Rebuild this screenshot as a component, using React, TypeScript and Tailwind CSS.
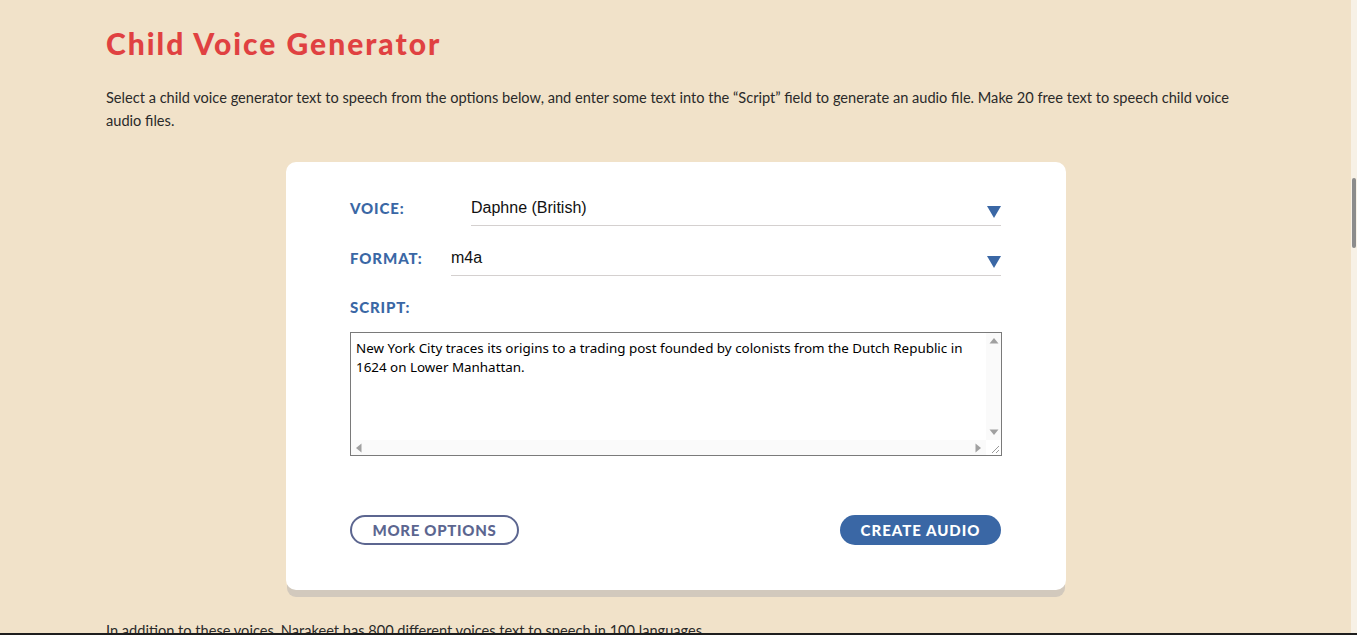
import React from "react";

function Caret() {
  return (
    <svg width="14" height="12" viewBox="0 0 14 12" className="shrink-0 mt-2">
      <path d="M0 0 L14 0 L7 12 Z" fill="#3a67a5" />
    </svg>
  );
}

function Arrow({ dir }: { dir: "up" | "down" | "left" | "right" }) {
  const d = {
    up: "M0.5 7.5 L5 2 L9.5 7.5 Z",
    down: "M0.5 2.5 L5 8 L9.5 2.5 Z",
    left: "M7.5 0.5 L2 5 L7.5 9.5 Z",
    right: "M2.5 0.5 L8 5 L2.5 9.5 Z",
  }[dir];
  return (
    <svg width="10" height="10" viewBox="0 0 10 10">
      <path d={d} fill="#a0a0a0" />
    </svg>
  );
}

function SelectRow({ label, value, labelWidth }: { label: string; value: string; labelWidth: string }) {
  return (
    <div className="flex items-center h-9">
      <div className={`${labelWidth} text-[15px] font-black tracking-[0.9px] text-[#3a67a5]`}>
        {label}
      </div>
      <div className="flex-1 h-9 flex items-center justify-between border-b border-[#d4d0cf] font-['Liberation_Sans',Arial,sans-serif] text-[16px] text-[#111]">
        <span>{value}</span>
        <Caret />
      </div>
    </div>
  );
}

export default function App() {
  return (
    <div className="relative h-screen overflow-hidden bg-[#f1e2c9] font-['Lato',sans-serif] text-[#222]">
      <div className="w-[1145px] mx-auto pt-[25px]">
        {/* Title */}
        <h1 className="text-[30px] leading-[36px] font-black text-[#e04141] tracking-[2px]">
          Child Voice Generator
        </h1>

        {/* Intro */}
        <p className="mt-[25px] text-[14.6px] leading-[23px] text-[#2a2a2a]">
          Select a child voice generator text to speech from the options below, and enter some text into the “Script” field to generate an audio file. Make 20 free text to speech child voice audio files.
        </p>

        {/* Card */}
        <div className="ml-[180px] mt-[30px] w-[780px] rounded-[10px] bg-white shadow-[0_8px_0_-1px_#d2c9bd] pl-[64px] pr-[65px] pt-[28px] pb-[45px]">
          <SelectRow label="VOICE:" value="Daphne (British)" labelWidth="w-[121px]" />
          <div className="mt-[14px]">
            <SelectRow label="FORMAT:" value="m4a" labelWidth="w-[101px]" />
          </div>

          <div className="mt-[21px] h-5 flex items-center text-[15px] font-black tracking-[0.9px] text-[#3a67a5]">
            SCRIPT:
          </div>

          {/* Script box with classic scrollbars */}
          <div className="mt-[15px] w-[652px] h-[124px] border border-[#7a7a7a] grid grid-cols-[1fr_15px] grid-rows-[1fr_15px] bg-white">
            <textarea
              readOnly
              className="block w-full h-full px-[5px] pt-[6px] overflow-hidden resize-none font-['Noto_Sans',sans-serif] text-[13.4px] leading-[19px] text-black outline-none"
              defaultValue="New York City traces its origins to a trading post founded by colonists from the Dutch Republic in 1624 on Lower Manhattan."
            />
            <div className="bg-[#fafafa] flex flex-col items-center justify-between py-[3px]">
              <Arrow dir="up" />
              <Arrow dir="down" />
            </div>
            <div className="bg-[#fafafa] flex items-center justify-between px-[3px]">
              <Arrow dir="left" />
              <Arrow dir="right" />
            </div>
            <div className="bg-white">
              <svg width="15" height="15" viewBox="0 0 15 15">
                <path d="M13 6 L6 13 M13 10 L10 13" stroke="#9a9a9a" strokeWidth="1" />
              </svg>
            </div>
          </div>

          {/* Buttons */}
          <div className="mt-[59px] flex items-center justify-between w-[651px]">
            <button className="w-[169px] h-[30px] rounded-full border-2 border-[#5c6690] text-[#5c6690] text-[15px] font-black tracking-[0.7px]">
              MORE OPTIONS
            </button>
            <button className="w-[161px] h-[30px] rounded-full bg-[#3a67a5] text-white text-[15px] font-black tracking-[1px]">
              CREATE AUDIO
            </button>
          </div>
        </div>

        <p className="mt-[29px] text-[14.6px] leading-[23px] text-[#2a2a2a]">
          In addition to these voices, Narakeet has 800 different voices text to speech in 100 languages.
        </p>
      </div>

      {/* page scrollbar */}
      <div className="absolute right-0 top-0 bottom-0 w-[6px] bg-[#f7f1e6]">
        <div className="absolute top-[178px] left-[1px] w-[4px] h-[70px] rounded-sm bg-[#8c8c8c]" />
      </div>
      <div className="absolute left-0 right-0 bottom-0 h-[2px] bg-[#1e1e1e]" />
    </div>
  );
}
